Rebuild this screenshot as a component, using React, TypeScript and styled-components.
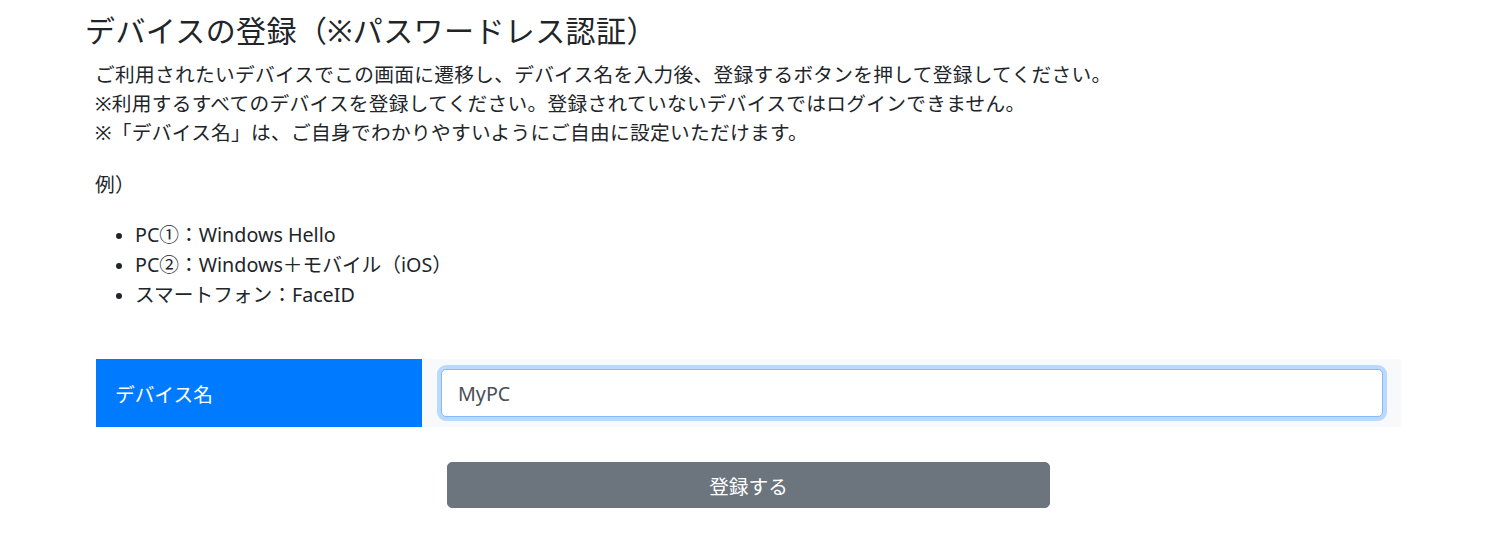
import { createGlobalStyle } from 'styled-components';
import styled from 'styled-components';

const GlobalStyle = createGlobalStyle`
  html, body {
    margin: 0;
    padding: 0;
    background: #fff;
  }
  body {
    font-family: "Noto Sans", "Noto Sans CJK JP", sans-serif;
    color: #212529;
  }
`;

const examples = ['PC①：Windows Hello', 'PC②：Windows＋モバイル（iOS）', 'スマートフォン：FaceID'];

export default function App() {
  return (
    <>
      <GlobalStyle />
      <Page>
        <Title>デバイスの登録（※パスワードレス認証）</Title>
        <Body>
          <Lead>
            ご利用されたいデバイスでこの画面に遷移し、デバイス名を入力後、登録するボタンを押して登録してください。
            <br />
            ※利用するすべてのデバイスを登録してください。登録されていないデバイスではログインできません。
            <br />
            ※「デバイス名」は、ご自身でわかりやすいようにご自由に設定いただけます。
          </Lead>
          <Lead $gap={21}>例）</Lead>
          <ExampleList>
            {examples.map(item => (
              <li key={item}>{item}</li>
            ))}
          </ExampleList>
          <FormRow>
            <FieldLabel htmlFor="device-name">デバイス名</FieldLabel>
            <FieldCell>
              <TextInput id="device-name" defaultValue="MyPC" />
            </FieldCell>
          </FormRow>
          <Actions>
            <SubmitButton type="button">登録する</SubmitButton>
          </Actions>
        </Body>
      </Page>
    </>
  );
}

const Page = styled.div`
  padding: 12px 0 40px 85px;
  width: 1316px;
`;

const Title = styled.h3`
  margin: 0 0 10px;
  font-size: 30px;
  font-weight: 400;
  line-height: 38px;
  letter-spacing: 0.4px;
  color: #212529;
`;

const Body = styled.div`
  padding-left: 11px;
`;

const Lead = styled.p<{ $gap?: number }>`
  margin: 0 0 ${p => p.$gap ?? 23}px;
  margin-left: -1px;
  font-size: 19.7px;
  line-height: 29px;
  letter-spacing: 0.3px;
`;

const ExampleList = styled.ul`
  margin: 0 0 49px;
  padding-left: 39px;
  font-size: 19.7px;
  line-height: 30px;
  li::marker {
    font-size: 18px;
  }
`;

const FormRow = styled.div`
  display: flex;
  height: 68px;
  width: 1305px;
`;

const FieldLabel = styled.label`
  display: flex;
  align-items: center;
  width: 307px;
  padding-left: 19px;
  background: #007bff;
  color: #fff;
  font-size: 19.7px;
`;

const FieldCell = styled.div`
  flex: 1;
  display: flex;
  align-items: center;
  padding: 0 18px 0 19px;
  background: #f8f9fa;
`;

const TextInput = styled.input`
  box-sizing: border-box;
  width: 100%;
  height: 48px;
  padding: 0 16px;
  border: 1px solid #80bdff;
  border-radius: 5px;
  background: #fff;
  color: #495057;
  font-family: "Noto Sans", "Noto Sans CJK JP", sans-serif;
  font-size: 19.7px;
  outline: none;
  box-shadow: 0 0 0 4px rgba(0, 123, 255, 0.25);
`;

const Actions = styled.div`
  display: flex;
  justify-content: center;
  width: 1305px;
  padding-top: 35px;
`;

const SubmitButton = styled.button`
  width: 603px;
  height: 46px;
  margin-left: 0;
  border: 1px solid #6c757d;
  border-radius: 5px;
  background: #6c757d;
  color: #fff;
  font-family: "Noto Sans", "Noto Sans CJK JP", sans-serif;
  font-size: 19.7px;
  cursor: pointer;
`;
